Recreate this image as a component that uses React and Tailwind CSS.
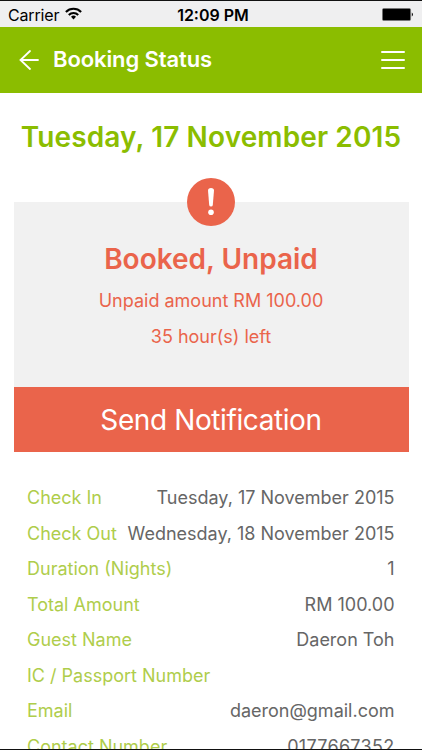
const details = [
  { label: 'Check In', value: 'Tuesday, 17 November 2015' },
  { label: 'Check Out', value: 'Wednesday, 18 November 2015' },
  { label: 'Duration (Nights)', value: '1' },
  { label: 'Total Amount', value: 'RM 100.00' },
  { label: 'Guest Name', value: 'Daeron Toh' },
  { label: 'IC / Passport Number', value: '' },
  { label: 'Email', value: 'daeron@gmail.com' },
  { label: 'Contact Number', value: '0177667352', numeric: true },
]

function StatusBar() {
  return (
    <div className="h-[27px] px-2 pt-px grid grid-cols-3 items-center border-t border-[#111] bg-[#efeff0] text-black">
      <div className="flex items-center gap-[6px] text-[16px] tracking-[-0.15px]">
        <span>Carrier</span>
        <svg className="-mt-0.5" width="17" height="13" viewBox="0 0 17 13" fill="none" stroke="#000" strokeWidth="2.1">
          <path d="M.9 4.9a10.7 10.7 0 0 1 15.2 0" />
          <path d="M3.8 7.9a6.6 6.6 0 0 1 9.4 0" />
          <path d="M8.5 12.4L6 9.8a3.6 3.6 0 0 1 5 0z" fill="#000" stroke="none" />
        </svg>
      </div>
      <div className="pl-1 text-center text-[16px] font-semibold whitespace-nowrap">12:09 PM</div>
      <div className="flex justify-end">
        <svg className="-mt-px" width="32" height="13" viewBox="0 0 32 13">
          <rect x=".4" y=".4" width="28.2" height="12.2" rx="1.5" fill="#000" stroke="#777" strokeWidth=".8" />
          <path d="M29.8 4.5a2.4 2.4 0 0 1 0 4z" />
        </svg>
      </div>
    </div>
  )
}

export default function App() {
  return (
    <div className="h-[750px] overflow-hidden border-b border-[#111] bg-white font-['Inter',sans-serif]">
      <StatusBar />
      <header className="h-[66px] pl-[19px] pr-[17px] flex items-center bg-[#8bbd00] text-white">
        <svg width="20" height="20" viewBox="0 0 20 20" fill="none" stroke="currentColor" strokeWidth="1.8" strokeLinecap="round">
          <path d="M19 10H1.5M11 1L1.5 10l9.5 9" />
        </svg>
        <h1 className="-mt-0.5 ml-3.5 flex-1 text-[22px] font-semibold tracking-[-0.1px] whitespace-nowrap">Booking Status</h1>
        <svg width="24" height="20" viewBox="0 0 24 20" stroke="currentColor" strokeWidth="2" strokeLinecap="round">
          <path d="M1 2h22M1 10h22M1 18h22" />
        </svg>
      </header>
      <h2 className="h-[109px] pt-[24px] text-center text-[28px] leading-[40px] font-semibold tracking-[0.12px] whitespace-nowrap text-[#8bbd00]">Tuesday, 17 November 2015</h2>
      <section className="relative ml-[14px] mr-[13px] h-[250px] flex flex-col bg-[#f1f1f1] text-center text-[#ea644b]">
        <svg className="absolute left-[172px] -top-[25px]" width="50" height="50" viewBox="0 0 50 50">
          <circle cx="25" cy="25" r="24" fill="#ea644b" />
          <path d="M22 13.5Q22 11 25 11T28 13.5L26.8 28Q26.6 29.5 25 29.5T23.2 28z" fill="#fff" />
          <circle cx="25" cy="35.2" r="2.8" fill="#fff" />
        </svg>
        <div className="flex-1 pt-[36px] pr-px">
          <h3 className="text-[28px] leading-[42px] font-semibold">Booked, Unpaid</h3>
          <p className="mt-[3px] text-[18px] leading-[36px]">Unpaid amount RM 100.00</p>
          <p className="text-[18px] leading-[36px]">35 hour(s) left</p>
        </div>
        <button className="h-[65px] pr-px bg-[#ea644b] text-white text-[28px] tracking-[-0.4px]">Send Notification</button>
      </section>
      <dl className="pl-[27px] pr-[27.5px] pt-[28px] text-[18px]">
        {details.map(item => (
          <div key={item.label} className="h-[35.5px] flex items-center justify-between whitespace-nowrap">
            <dt className="text-[#afcd4b]">{item.label}</dt>
            <dd className={item.numeric ? 'text-[#666] tracking-[0.3px]' : 'text-[#666]'}>{item.value}</dd>
          </div>
        ))}
      </dl>
    </div>
  )
}
